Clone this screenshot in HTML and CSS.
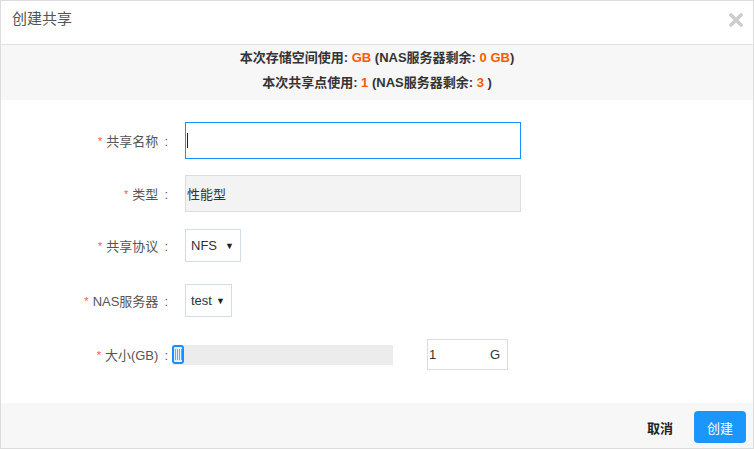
FILE: index.html
```html
<!DOCTYPE html>
<html lang="zh">
<head>
<meta charset="utf-8">
<title>创建共享</title>
<link rel="stylesheet" href="styles.css">
</head>
<body>
<div class="dialog">
  <div class="header">
    <div class="title">创建共享</div>
    <svg class="close" width="14" height="14" viewBox="0 0 14 14"><path d="M2 2 L12 12 M12 2 L2 12" stroke="#cdcdcd" stroke-width="3.6" stroke-linecap="round"/></svg>
  </div>
  <div class="info">
    <div>本次存储空间使用: <span class="hl">GB</span> (NAS服务器剩余: <span class="hl">0 GB</span>)</div>
    <div>本次共享点使用: <span class="hl">1</span> (NAS服务器剩余: <span class="hl">3</span> )</div>
  </div>
  <div class="form">
    <div class="row row-name">
      <label class="label"><span class="star">*</span>共享名称<span class="colon">:</span></label>
      <div class="text-input"><span class="caret"></span></div>
    </div>
    <div class="row row-type">
      <label class="label"><span class="star">*</span>类型<span class="colon">:</span></label>
      <div class="readonly">性能型</div>
    </div>
    <div class="row row-proto">
      <label class="label"><span class="star">*</span>共享协议<span class="colon">:</span></label>
      <div class="select sel-nfs"><span>NFS</span><span class="arrow">▼</span></div>
    </div>
    <div class="row row-nas">
      <label class="label"><span class="star">*</span>NAS服务器<span class="colon">:</span></label>
      <div class="select sel-test"><span>test</span><span class="arrow">▼</span></div>
    </div>
    <div class="row row-size">
      <label class="label"><span class="star">*</span>大小(GB)<span class="colon">:</span></label>
      <div class="slider">
        <div class="track"></div>
        <div class="thumb"><i></i><i></i><i></i><i></i></div>
      </div>
      <div class="num"><span>1</span><span>G</span></div>
    </div>
  </div>
  <div class="footer">
    <button class="btn btn-cancel">取消</button>
    <button class="btn btn-ok">创建</button>
  </div>
</div>
</body>
</html>
```
FILE: styles.css
```css
html, body {
  margin: 0;
  padding: 0;
  background: #fff;
}
body {
  font-family: "Liberation Sans", "Noto Sans CJK SC", sans-serif;
  color: #333;
}
.dialog {
  width: 754px;
  height: 449px;
  box-sizing: border-box;
  border: 1px solid #dcdcdc;
  display: flex;
  flex-direction: column;
  background: #fff;
}
.header {
  height: 43px;
  border-bottom: 1px solid #dde2ea;
  display: flex;
  justify-content: space-between;
  align-items: flex-start;
  padding: 0 10px 0 11px;
}
.title {
  font-size: 15px;
  color: #555;
  line-height: 20px;
  margin-top: 8px;
}
.close {
  margin-top: 12px;
}
.info {
  height: 55px;
  box-sizing: border-box;
  background: #f7f7f7;
  text-align: center;
  font-size: 13px;
  font-weight: bold;
  line-height: 25px;
  padding-top: 0;
  color: #333;
}
.hl {
  color: #ff5a00;
}
.form {
  flex: 1;
  display: flex;
  flex-direction: column;
  padding-top: 22px;
}
.row {
  display: flex;
  align-items: center;
}
.row-type { margin-top: 16px; }
.row-proto { margin-top: 17px; }
.row-nas { margin-top: 22px; }
.row-size { margin-top: 22px; }
.label {
  width: 170px;
  text-align: right;
  font-size: 13px;
  color: #555;
  flex-shrink: 0;
}
.colon {
  margin: 0 3px 0 6px;
}
.star {
  color: #f55;
  font-size: 11px;
  margin-right: 4px;
  position: relative;
  top: -1px;
}
.text-input {
  margin-left: 14px;
  width: 336px;
  height: 37px;
  box-sizing: border-box;
  border: 1px solid #1890ff;
  display: flex;
  align-items: center;
  padding-left: 1px;
}
.caret {
  width: 1px;
  height: 15px;
  background: #222;
}
.readonly {
  margin-left: 14px;
  width: 336px;
  height: 37px;
  box-sizing: border-box;
  border: 1px solid #dcdcdc;
  background: #f3f3f3;
  display: flex;
  align-items: center;
  padding-left: 1px;
  font-size: 13px;
  color: #333;
}
.select {
  margin-left: 14px;
  height: 33px;
  box-sizing: border-box;
  border: 1px solid #d3dde8;
  display: flex;
  align-items: center;
  justify-content: space-between;
  padding: 0 6px 0 5px;
  font-size: 13px;
  color: #333;
}
.sel-nfs { width: 56px; }
.sel-test { width: 47px; }
.arrow {
  font-size: 9px;
  color: #222;
}
.slider {
  position: relative;
  margin-left: 1px;
  width: 221px;
  height: 20px;
}
.track {
  margin-left: 1px;
  height: 20px;
  background: #ececec;
}
.thumb {
  position: absolute;
  left: 0;
  top: 0;
  width: 12px;
  height: 19px;
  box-sizing: border-box;
  border: 2px solid #1890ff;
  border-radius: 3px;
  background: #e3f1ff;
  display: flex;
  justify-content: center;
  align-items: center;
  gap: 1px;
}
.thumb i {
  display: block;
  width: 1px;
  height: 11px;
  background: #5aaefc;
}
.num {
  margin-left: 34px;
  width: 81px;
  height: 31px;
  box-sizing: border-box;
  border: 1px solid #dcdcdc;
  display: flex;
  align-items: center;
  justify-content: space-between;
  padding: 0 7px 0 1px;
  font-size: 13px;
  color: #333;
}
.footer {
  height: 45px;
  box-sizing: border-box;
  background: #f7f7f7;
  display: flex;
  justify-content: flex-end;
  align-items: flex-start;
  padding: 8px 7px 0 0;
}
.btn {
  height: 32px;
  border: none;
  border-radius: 4px;
  font-family: "Liberation Sans", "Noto Sans CJK SC", sans-serif;
  font-size: 13px;
  padding: 0 13px;
  cursor: pointer;
}
.btn-cancel {
  background: transparent;
  color: #222;
  font-weight: bold;
  margin-right: 8px;
}
.btn-ok {
  background: #1a96fc;
  color: #fff;
  width: 52px;
  padding: 0;
}
```
